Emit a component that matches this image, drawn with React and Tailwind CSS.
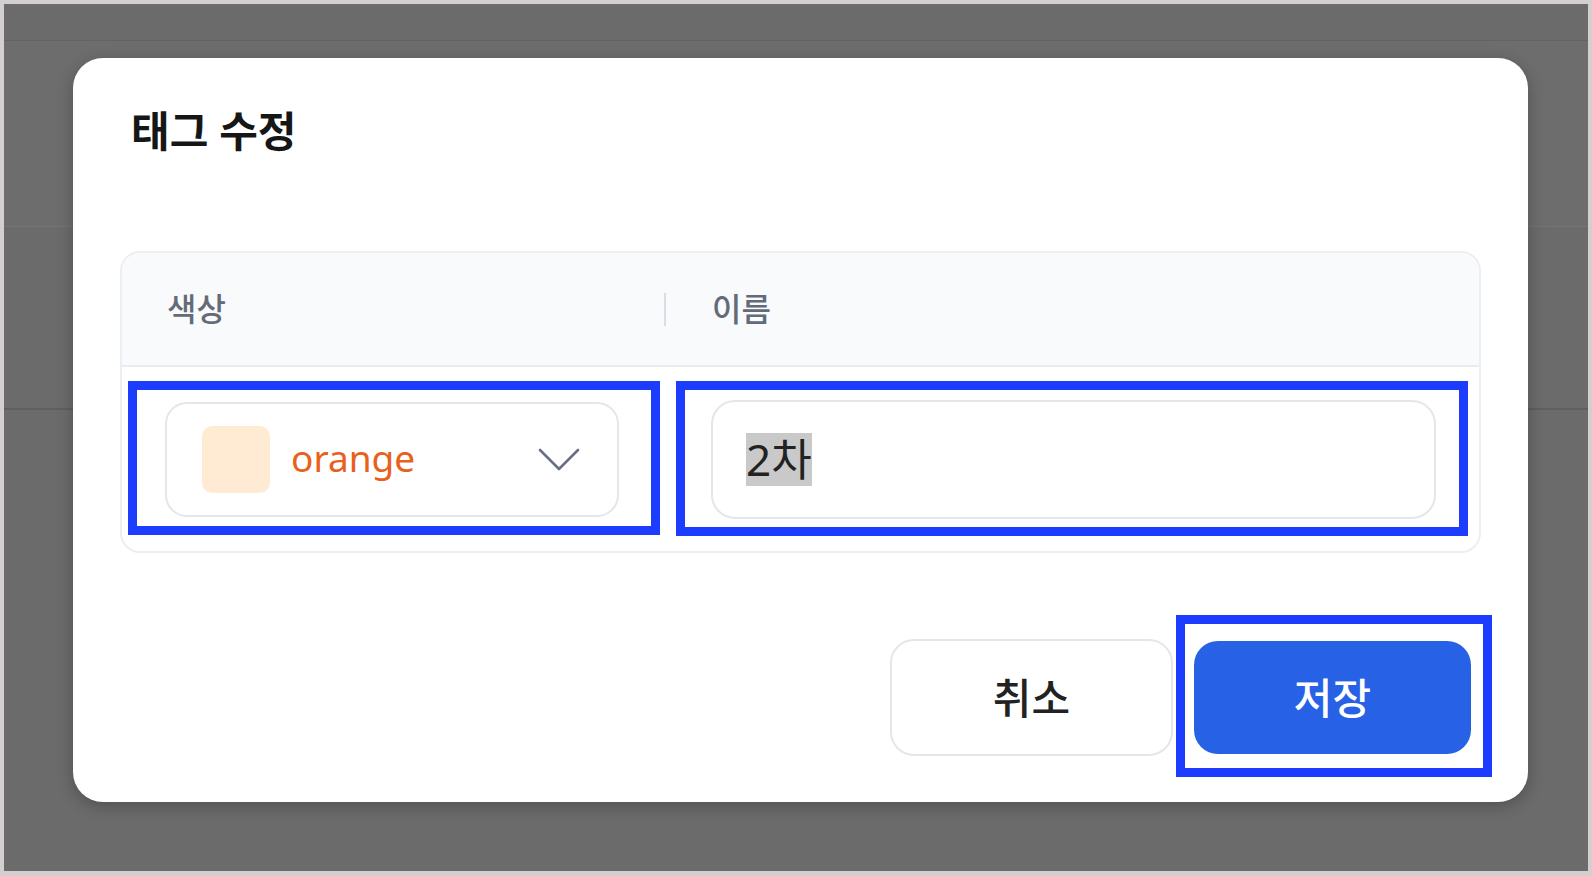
// Tag edit modal over a dimmed page

const FONT = "font-['Noto_Sans','Noto_Sans_CJK_KR',sans-serif]"

function Chevron() {
  return (
    <svg width="44" height="28" viewBox="0 0 44 28" fill="none">
      <polyline points="3,5 22,24 41,5" stroke="#687083" strokeWidth="2.6" strokeLinecap="round" strokeLinejoin="round" />
    </svg>
  )
}

function ColorSelect() {
  return (
    <button className="w-[454px] h-[115px] flex items-center rounded-[22px] border-2 border-[#e3e6eb] bg-white pl-[35px] pr-[36px]">
      <span className="w-[68px] h-[67px] rounded-[10px] bg-[#ffead3] shrink-0" />
      <span className="ml-[21px] text-[37px] text-[#e8601c] leading-none pb-[4px]">orange</span>
      <span className="ml-auto">
        <Chevron />
      </span>
    </button>
  )
}

export default function App() {
  return (
    <div className={`w-[1592px] h-[876px] bg-[#d4cfcf] pt-[4px] px-[4px] pb-[5px] ${FONT}`}>
      <div className="relative w-full h-full bg-[#6b6b6b] overflow-hidden">
        {/* faint page behind the overlay */}
        <div className="h-[37px] border-b border-[#646464]" />
        <div className="h-[186px] border-b border-[#747474] bg-[#6d6d6d]" />
        <div className="h-[183px] border-b-2 border-[#5f5f5f]" />

        <div className="absolute left-[69px] top-[54px] w-[1455px] h-[744px] bg-white rounded-[30px] shadow-[0_4px_16px_rgba(0,0,0,0.25)] flex flex-col">
          <h2 className="pt-[50px] pl-[58px] text-[42px] leading-[46px] font-bold text-[#161616]">태그 수정</h2>

          <div className="mx-[47px] mt-[97px] h-[302px] rounded-[20px] border-2 border-[#eceef2] overflow-hidden flex flex-col">
            <div className="h-[114px] bg-[#f8fafc] border-b-2 border-[#e8ebef] flex items-center pl-[45px] text-[32px] font-medium text-[#646b78]">
              <div className="w-[497px]">색상</div>
              <div className="w-[2px] h-[33px] bg-[#d8dee6]" />
              <div className="pl-[46px]">이름</div>
            </div>
            <div className="flex-1 flex items-center px-[43px] gap-[92px]">
              <ColorSelect />
              <div className="flex-1 h-[119px] rounded-[24px] border-2 border-[#e3e6eb] bg-white flex items-center pl-[33px]">
                <span className="bg-[#c9c9c9] text-[44px] leading-[53px] text-[#222]">2차</span>
              </div>
            </div>
          </div>

          <div className="mt-[86px] flex items-center justify-end gap-[21px] pr-[57px]">
            <button className="w-[283px] h-[117px] rounded-[24px] border-2 border-[#e3e6eb] bg-white text-[42px] font-medium text-[#222]">취소</button>
            <button className="w-[277px] h-[113px] rounded-[24px] bg-[#2762e6] text-[42px] font-medium text-white">저장</button>
          </div>

          {/* annotation outlines */}
          <div className="absolute left-[55px] top-[323px] w-[532px] h-[154px] border-[9px] border-[#1c3dfd]" />
          <div className="absolute left-[603px] top-[323px] w-[792px] h-[155px] border-[9px] border-[#1c3dfd]" />
          <div className="absolute left-[1103px] top-[557px] w-[316px] h-[162px] border-[9px] border-[#1c3dfd]" />
        </div>
      </div>
    </div>
  )
}
